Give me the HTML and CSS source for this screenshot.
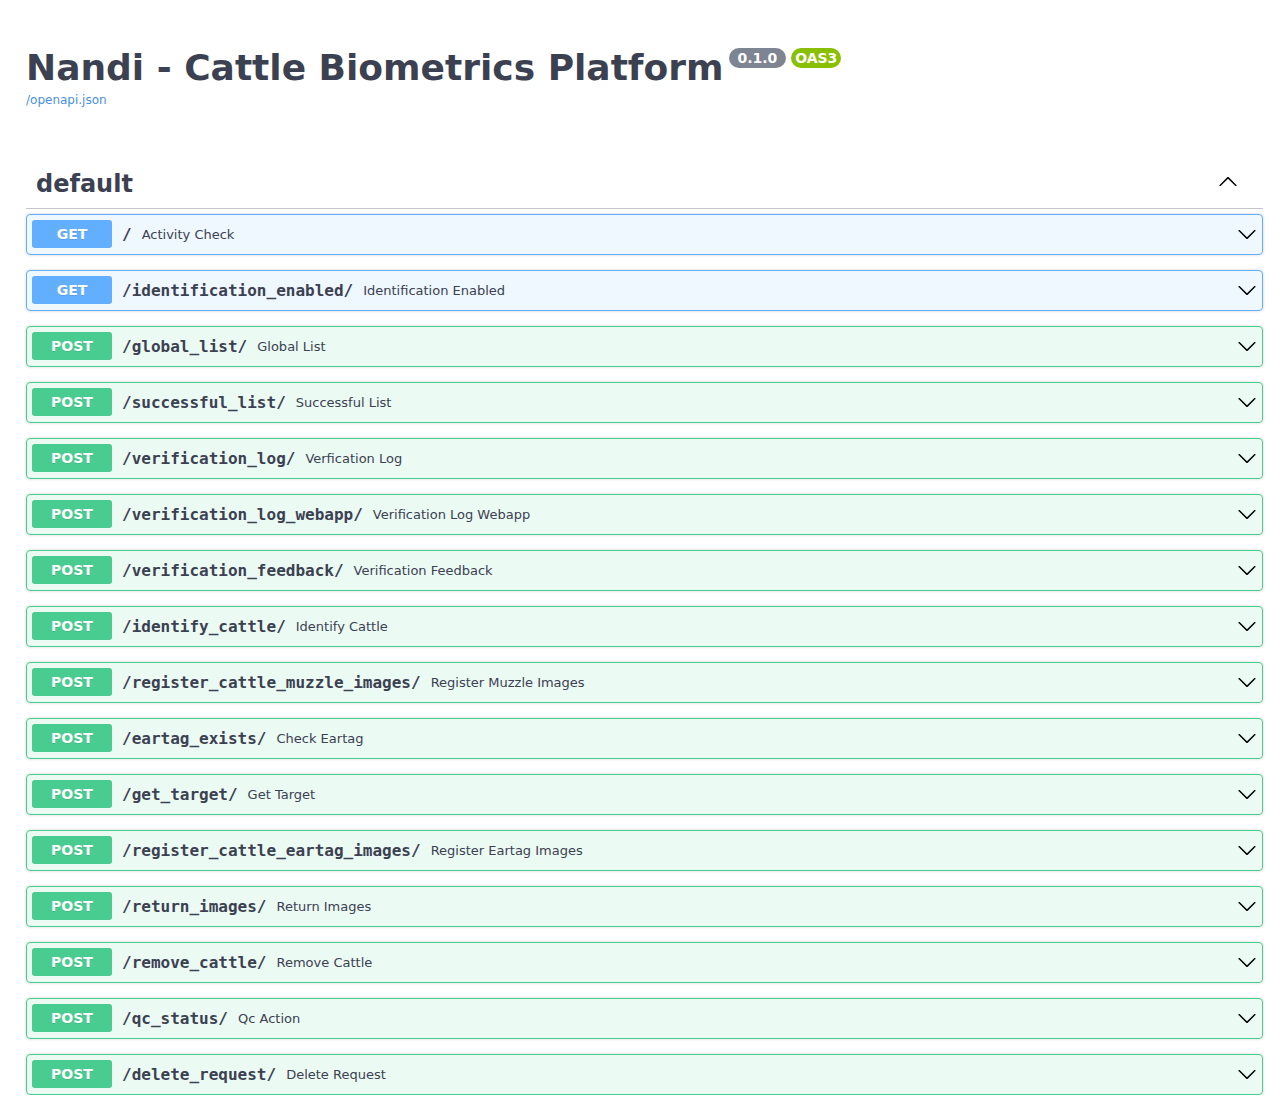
FILE: index.html
```html
<!DOCTYPE html>
<html lang="en">
<head>
<meta charset="utf-8">
<title>Nandi - Cattle Biometrics Platform - Swagger UI</title>
<link rel="stylesheet" href="styles.css">
</head>
<body>
<div class="wrapper">
  <div class="info">
    <h2 class="title"><span class="title-text">Nandi - Cattle Biometrics Platform</span><small class="stamp"> 0.1.0 </small><small class="stamp stamp-oas">OAS3</small></h2>
    <a class="url" href="#">/openapi.json</a>
  </div>

  <div class="tag-section">
    <div class="tag">
      <h3 class="tag-name">default</h3>
      <span class="tag-toggle">
        <svg viewBox="0 0 20 20" width="20" height="20"><path d="M17.418 14.908c.272.268.709.268.979 0s.271-.701 0-.969l-7.908-7.83c-.27-.268-.707-.268-.979 0l-7.908 7.83c-.27.268-.27.701 0 .969.271.268.709.268.979 0L10 7.767l7.418 7.141z"/></svg>
      </span>
    </div>

    <div class="op op-get"><span class="method">GET</span><span class="path">/</span><span class="desc">Activity Check</span><svg class="arrow" viewBox="0 0 20 20" width="20" height="20"><path d="M17.418 6.109c.272-.268.709-.268.979 0s.271.701 0 .969l-7.908 7.83c-.27.268-.707.268-.979 0l-7.908-7.83c-.27-.268-.27-.701 0-.969.271-.268.709-.268.979 0L10 13.25l7.418-7.141z"/></svg></div>
    <div class="op op-get"><span class="method">GET</span><span class="path">/identification_enabled/</span><span class="desc">Identification Enabled</span><svg class="arrow" viewBox="0 0 20 20" width="20" height="20"><path d="M17.418 6.109c.272-.268.709-.268.979 0s.271.701 0 .969l-7.908 7.83c-.27.268-.707.268-.979 0l-7.908-7.83c-.27-.268-.27-.701 0-.969.271-.268.709-.268.979 0L10 13.25l7.418-7.141z"/></svg></div>
    <div class="op op-post"><span class="method">POST</span><span class="path">/global_list/</span><span class="desc">Global List</span><svg class="arrow" viewBox="0 0 20 20" width="20" height="20"><path d="M17.418 6.109c.272-.268.709-.268.979 0s.271.701 0 .969l-7.908 7.83c-.27.268-.707.268-.979 0l-7.908-7.83c-.27-.268-.27-.701 0-.969.271-.268.709-.268.979 0L10 13.25l7.418-7.141z"/></svg></div>
    <div class="op op-post"><span class="method">POST</span><span class="path">/successful_list/</span><span class="desc">Successful List</span><svg class="arrow" viewBox="0 0 20 20" width="20" height="20"><path d="M17.418 6.109c.272-.268.709-.268.979 0s.271.701 0 .969l-7.908 7.83c-.27.268-.707.268-.979 0l-7.908-7.83c-.27-.268-.27-.701 0-.969.271-.268.709-.268.979 0L10 13.25l7.418-7.141z"/></svg></div>
    <div class="op op-post"><span class="method">POST</span><span class="path">/verification_log/</span><span class="desc">Verfication Log</span><svg class="arrow" viewBox="0 0 20 20" width="20" height="20"><path d="M17.418 6.109c.272-.268.709-.268.979 0s.271.701 0 .969l-7.908 7.83c-.27.268-.707.268-.979 0l-7.908-7.83c-.27-.268-.27-.701 0-.969.271-.268.709-.268.979 0L10 13.25l7.418-7.141z"/></svg></div>
    <div class="op op-post"><span class="method">POST</span><span class="path">/verification_log_webapp/</span><span class="desc">Verification Log Webapp</span><svg class="arrow" viewBox="0 0 20 20" width="20" height="20"><path d="M17.418 6.109c.272-.268.709-.268.979 0s.271.701 0 .969l-7.908 7.83c-.27.268-.707.268-.979 0l-7.908-7.83c-.27-.268-.27-.701 0-.969.271-.268.709-.268.979 0L10 13.25l7.418-7.141z"/></svg></div>
    <div class="op op-post"><span class="method">POST</span><span class="path">/verification_feedback/</span><span class="desc">Verification Feedback</span><svg class="arrow" viewBox="0 0 20 20" width="20" height="20"><path d="M17.418 6.109c.272-.268.709-.268.979 0s.271.701 0 .969l-7.908 7.83c-.27.268-.707.268-.979 0l-7.908-7.83c-.27-.268-.27-.701 0-.969.271-.268.709-.268.979 0L10 13.25l7.418-7.141z"/></svg></div>
    <div class="op op-post"><span class="method">POST</span><span class="path">/identify_cattle/</span><span class="desc">Identify Cattle</span><svg class="arrow" viewBox="0 0 20 20" width="20" height="20"><path d="M17.418 6.109c.272-.268.709-.268.979 0s.271.701 0 .969l-7.908 7.83c-.27.268-.707.268-.979 0l-7.908-7.83c-.27-.268-.27-.701 0-.969.271-.268.709-.268.979 0L10 13.25l7.418-7.141z"/></svg></div>
    <div class="op op-post"><span class="method">POST</span><span class="path">/register_cattle_muzzle_images/</span><span class="desc">Register Muzzle Images</span><svg class="arrow" viewBox="0 0 20 20" width="20" height="20"><path d="M17.418 6.109c.272-.268.709-.268.979 0s.271.701 0 .969l-7.908 7.83c-.27.268-.707.268-.979 0l-7.908-7.83c-.27-.268-.27-.701 0-.969.271-.268.709-.268.979 0L10 13.25l7.418-7.141z"/></svg></div>
    <div class="op op-post"><span class="method">POST</span><span class="path">/eartag_exists/</span><span class="desc">Check Eartag</span><svg class="arrow" viewBox="0 0 20 20" width="20" height="20"><path d="M17.418 6.109c.272-.268.709-.268.979 0s.271.701 0 .969l-7.908 7.83c-.27.268-.707.268-.979 0l-7.908-7.83c-.27-.268-.27-.701 0-.969.271-.268.709-.268.979 0L10 13.25l7.418-7.141z"/></svg></div>
    <div class="op op-post"><span class="method">POST</span><span class="path">/get_target/</span><span class="desc">Get Target</span><svg class="arrow" viewBox="0 0 20 20" width="20" height="20"><path d="M17.418 6.109c.272-.268.709-.268.979 0s.271.701 0 .969l-7.908 7.83c-.27.268-.707.268-.979 0l-7.908-7.83c-.27-.268-.27-.701 0-.969.271-.268.709-.268.979 0L10 13.25l7.418-7.141z"/></svg></div>
    <div class="op op-post"><span class="method">POST</span><span class="path">/register_cattle_eartag_images/</span><span class="desc">Register Eartag Images</span><svg class="arrow" viewBox="0 0 20 20" width="20" height="20"><path d="M17.418 6.109c.272-.268.709-.268.979 0s.271.701 0 .969l-7.908 7.83c-.27.268-.707.268-.979 0l-7.908-7.83c-.27-.268-.27-.701 0-.969.271-.268.709-.268.979 0L10 13.25l7.418-7.141z"/></svg></div>
    <div class="op op-post"><span class="method">POST</span><span class="path">/return_images/</span><span class="desc">Return Images</span><svg class="arrow" viewBox="0 0 20 20" width="20" height="20"><path d="M17.418 6.109c.272-.268.709-.268.979 0s.271.701 0 .969l-7.908 7.83c-.27.268-.707.268-.979 0l-7.908-7.83c-.27-.268-.27-.701 0-.969.271-.268.709-.268.979 0L10 13.25l7.418-7.141z"/></svg></div>
    <div class="op op-post"><span class="method">POST</span><span class="path">/remove_cattle/</span><span class="desc">Remove Cattle</span><svg class="arrow" viewBox="0 0 20 20" width="20" height="20"><path d="M17.418 6.109c.272-.268.709-.268.979 0s.271.701 0 .969l-7.908 7.83c-.27.268-.707.268-.979 0l-7.908-7.83c-.27-.268-.27-.701 0-.969.271-.268.709-.268.979 0L10 13.25l7.418-7.141z"/></svg></div>
    <div class="op op-post"><span class="method">POST</span><span class="path">/qc_status/</span><span class="desc">Qc Action</span><svg class="arrow" viewBox="0 0 20 20" width="20" height="20"><path d="M17.418 6.109c.272-.268.709-.268.979 0s.271.701 0 .969l-7.908 7.83c-.27.268-.707.268-.979 0l-7.908-7.83c-.27-.268-.27-.701 0-.969.271-.268.709-.268.979 0L10 13.25l7.418-7.141z"/></svg></div>
    <div class="op op-post"><span class="method">POST</span><span class="path">/delete_request/</span><span class="desc">Delete Request</span><svg class="arrow" viewBox="0 0 20 20" width="20" height="20"><path d="M17.418 6.109c.272-.268.709-.268.979 0s.271.701 0 .969l-7.908 7.83c-.27.268-.707.268-.979 0l-7.908-7.83c-.27-.268-.27-.701 0-.969.271-.268.709-.268.979 0L10 13.25l7.418-7.141z"/></svg></div>
  </div>
</div>
</body>
</html>
```

FILE: styles.css
```css
html, body {
  margin: 0;
  background: #fff;
}

body {
  font-family: "DejaVu Sans", sans-serif;
  color: #3b4151;
}

.wrapper {
  padding: 47px 8px 0 26px;
}

.title {
  display: flex;
  align-items: flex-start;
  margin: 0;
  font-size: 36px;
  font-weight: 700;
  line-height: 42px;
  color: #3b4151;
}

.stamp {
  margin: 1px 0 0 5px;
  padding: 2px 4px;
  border-radius: 57px;
  background: #7d8492;
  color: #fff;
  font-size: 14px;
  font-weight: 700;
  line-height: 16px;
  white-space: pre;
}

.stamp-oas {
  background: #89bf04;
}

.url {
  display: block;
  margin-top: 4px;
  font-size: 12px;
  line-height: 14px;
  color: #4990e2;
  text-decoration: none;
}

.tag {
  display: flex;
  align-items: flex-start;
  justify-content: space-between;
  margin: 53px 0 5px;
  padding: 10px 20px 10px 10px;
  border-bottom: 1px solid rgba(59, 65, 81, 0.3);
}

.tag-name {
  margin: 0;
  font-size: 24px;
  font-weight: 700;
  line-height: 28px;
  color: #3b4151;
}

.tag-toggle svg {
  display: block;
  margin: 1px 5px 0 0;
  fill: #000;
}

.op {
  display: flex;
  align-items: center;
  padding: 5px 5px 6px;
  margin-bottom: 15px;
  border: 1px solid;
  border-radius: 4px;
  box-shadow: 0 0 3px rgba(0, 0, 0, 0.19);
}

.op:last-child {
  margin-bottom: 0;
}

.op-get {
  background: rgba(97, 175, 254, 0.1);
  border-color: #61affe;
}

.op-post {
  background: rgba(73, 204, 144, 0.1);
  border-color: #49cc90;
}

.method {
  min-width: 80px;
  padding: 6px 0;
  border-radius: 3px;
  color: #fff;
  font-size: 14px;
  font-weight: 700;
  line-height: 16px;
  text-align: center;
  text-shadow: 0 1px 0 rgba(0, 0, 0, 0.1);
}

.op-get .method {
  background: #61affe;
}

.op-post .method {
  background: #49cc90;
}

.path {
  padding: 2px 10px 0;
  font-family: "DejaVu Sans Mono", monospace;
  font-size: 16px;
  font-weight: 700;
  line-height: 20px;
  color: #3b4151;
}

.desc {
  flex: 1;
  padding-top: 2px;
  font-size: 13px;
  line-height: 16px;
  color: #3b4151;
}

.arrow {
  display: block;
  flex: none;
  fill: #000;
}
```
